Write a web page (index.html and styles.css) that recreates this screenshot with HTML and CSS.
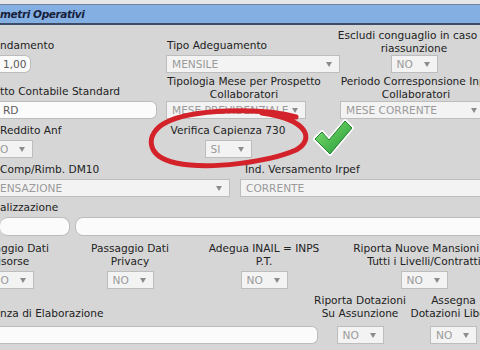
FILE: index.html
```html
<!DOCTYPE html>
<html lang="it">
<head>
    <link rel="stylesheet" href="styles.css">
    <meta charset="UTF-8">
    <title>Parametri Operativi</title>
</head>
<body>
    <div class="page">
        <div class="panel-title">metri Operativi</div>

        <div class="form">
            <div class="row r1">
                <div class="field left w166">
                    <span class="lbl">ndamento</span>
                    <div class="inp cut w31">1,00</div>
                </div>
                <div class="field left w171">
                    <span class="lbl pad1">Tipo Adeguamento</span>
                    <div class="sel w174"><span>MENSILE</span><i class="arr"></i></div>
                </div>
                <div class="field center w154">
                    <span class="lbl two">Escludi conguaglio in caso di<br>riassunzione</span>
                    <div class="sel w47"><span>NO</span><i class="arr"></i></div>
                </div>
            </div>

            <div class="row r2">
                <div class="field left w166">
                    <span class="lbl">tto Contabile Standard</span>
                    <div class="inp cut w157">RD</div>
                </div>
                <div class="field center w156">
                    <span class="lbl two">Tipologia Mese per Prospetto<br>Collaboratori</span>
                    <div class="sel w140 start"><span>MESE PREVIDENZIALE</span><i class="arr"></i></div>
                </div>
                <div class="field center w152 push18">
                    <span class="lbl two">Periodo Corresponsione Inps<br>Collaboratori</span>
                    <div class="sel w145 start"><span>MESE CORRENTE</span><i class="arr"></i></div>
                </div>
            </div>

            <div class="row r3">
                <div class="field left w166">
                    <span class="lbl">Reddito Anf</span>
                    <div class="sel cut w33"><span>O</span><i class="arr"></i></div>
                </div>
                <div class="field center w124">
                    <span class="lbl">Verifica Capienza 730</span>
                    <div class="sel w47"><span>SI</span><i class="arr"></i></div>
                </div>
            </div>

            <div class="row r4">
                <div class="field left w240">
                    <span class="lbl">Comp/Rimb. DM10</span>
                    <div class="sel cut w230"><span>ENSAZIONE</span><i class="arr"></i></div>
                </div>
                <div class="field left w250">
                    <span class="lbl pad5">Ind. Versamento Irpef</span>
                    <div class="sel w250"><span>CORRENTE</span></div>
                </div>
            </div>

            <div class="row r5">
                <div class="field left w480">
                    <span class="lbl">alizzazione</span>
                    <div class="pair">
                        <div class="inp cut tall w70"></div>
                        <div class="inp tall w420"></div>
                    </div>
                </div>
            </div>

            <div class="row r6">
                <div class="field center w100 pull40">
                    <span class="lbl two">Passaggio Dati<br>Risorse</span>
                    <div class="sel w47"><span>NO</span><i class="arr"></i></div>
                </div>
                <div class="field center w140">
                    <span class="lbl two">Passaggio Dati<br>Privacy</span>
                    <div class="sel w47"><span>NO</span><i class="arr"></i></div>
                </div>
                <div class="field center w128">
                    <span class="lbl two">Adegua INAIL = INPS<br>P.T.</span>
                    <div class="sel w47"><span>NO</span><i class="arr"></i></div>
                </div>
                <div class="field center w192">
                    <span class="lbl two">Riporta Nuove Mansioni su<br>Tutti i Livelli/Contratti</span>
                    <div class="sel w47"><span>NO</span><i class="arr"></i></div>
                </div>
            </div>

            <div class="row r7">
                <div class="field left w320">
                    <span class="lbl">nza di Elaborazione</span>
                    <div class="inp cut w318"></div>
                </div>
                <div class="field center w80">
                    <span class="lbl two">Riporta Dotazioni<br>Su Assunzione</span>
                    <div class="sel w47"><span>NO</span><i class="arr"></i></div>
                </div>
                <div class="field center w107">
                    <span class="lbl two">Assegna<br>Dotazioni Libere</span>
                    <div class="sel w47"><span>NO</span><i class="arr"></i></div>
                </div>
            </div>
        </div>

        <!-- annotations drawn over the form -->
        <svg class="marks" width="480" height="350" viewBox="0 0 480 350">
            <defs>
                <linearGradient id="tick" x1="0" y1="0" x2="1" y2="1">
                    <stop offset="0" stop-color="#86e472"/>
                    <stop offset="1" stop-color="#1d9634"/>
                </linearGradient>
            </defs>
            <path class="loop" d="M296,117 C262,107 190,109 165,123 C146,133 144,156 176,163 C210,170 268,162 296,150 C314,140 310,120 262,113"/>
            <path class="tick-edge" d="M315,139 L322,132 L329,140 L345,121 L352,128 L330,154 Z"/>
            <path class="tick-fill" d="M315,139 L322,132 L329,140 L345,121 L352,128 L330,154 Z"/>
        </svg>
    </div>
</body>
</html>
```

FILE: styles.css
```css
html, body {
    margin: 0;
    padding: 0;
}

body {
    width: 480px;
    height: 350px;
    overflow: hidden;
    background-color: #d6d6d6;
    font-family: "DejaVu Sans", Verdana, sans-serif;
    font-size: 10.6px;
    color: #222;
}

.page {
    position: relative;
    width: 480px;
    height: 350px;
    overflow: hidden;
    background: linear-gradient(#e6e6e6 0, #e6e6e6 4px, #d6d6d6 4px);
}

.panel-title {
    margin-top: 4px;
    height: 18px;
    line-height: 18px;
    border-top: 1px solid #6f83a3;
    border-bottom: 2px solid #3d4b66;
    background-color: #84afe2;
    color: #17213c;
    font-size: 10.5px;
    font-weight: bold;
    font-style: italic;
    letter-spacing: -0.4px;
    white-space: nowrap;
}

.row {
    display: flex;
    align-items: flex-end;
}

.r1 { margin-top: 4px; }
.r2 { margin-top: 2px; }
.r3 { margin-top: 5px; }
.r4 { margin-top: 5px; }
.r5 { margin-top: 4px; }
.r6 { margin-top: 6px; }
.r7 { margin-top: 5px; }

.field {
    display: flex;
    flex-direction: column;
    flex: none;
}

.field.left {
    align-items: flex-start;
}

.field.center {
    align-items: center;
    text-align: center;
}

.lbl {
    white-space: nowrap;
    line-height: 13px;
    margin-bottom: 3px;
}

.lbl.two {
    margin-bottom: 0;
}

.r6 .lbl.two {
    margin-bottom: 3px;
}

.r7 .lbl {
    margin-bottom: 6px;
}

.pad1 { padding-left: 1px; }
.pad5 { padding-left: 5px; }
.push18 { margin-left: 18px; }
.pull40 { margin-left: -40px; }
.start { align-self: flex-start; }

.w31 { width: 31px; }
.w33 { width: 33px; }
.w47 { width: 47px; }
.w70 { width: 70px; }
.w80 { width: 80px; }
.w100 { width: 100px; }
.w107 { width: 107px; }
.w124 { width: 124px; }
.w128 { width: 128px; }
.w140 { width: 140px; }
.w145 { width: 145px; }
.w152 { width: 152px; }
.w154 { width: 154px; }
.w156 { width: 156px; }
.w157 { width: 157px; }
.w166 { width: 166px; }
.w171 { width: 171px; }
.w174 { width: 174px; }
.w192 { width: 192px; }
.w230 { width: 230px; }
.w240 { width: 240px; }
.w250 { width: 250px; }
.w318 { width: 318px; }
.w320 { width: 320px; }
.w420 { width: 420px; }
.w480 { width: 480px; }

.inp, .sel {
    box-sizing: border-box;
    height: 18px;
    line-height: 16px;
    flex: none;
    white-space: nowrap;
    overflow: hidden;
    text-align: left;
}

.inp {
    padding-left: 4px;
    border: 1px solid #bcbcbc;
    border-radius: 6px;
    background-color: #fbfbfb;
    color: #5a5a5a;
}

.inp.tall {
    height: 19px;
    border-radius: 8px;
}

.sel {
    display: flex;
    align-items: center;
    justify-content: space-between;
    padding: 0 7px 0 5px;
    border: 1px solid #bdbdbd;
    background-color: #f3f3f3;
    color: #9a9a9a;
}

.sel span {
    overflow: hidden;
}

.cut {
    border-left: none;
    border-top-left-radius: 0;
    border-bottom-left-radius: 0;
    padding-left: 0;
}

.inp.cut {
    padding-left: 3px;
}

.arr {
    flex: none;
    width: 0;
    height: 0;
    margin-left: 4px;
    border-left: 3px solid transparent;
    border-right: 3px solid transparent;
    border-top: 5px solid #8c8c8c;
}

.pair {
    display: flex;
    gap: 5px;
}

.marks {
    position: absolute;
    top: 0;
    left: 0;
    pointer-events: none;
}

.loop {
    fill: none;
    stroke: #d3222a;
    stroke-width: 5;
    stroke-linecap: round;
}

.tick-edge {
    fill: none;
    stroke: #ffffff;
    stroke-width: 4;
    stroke-linejoin: round;
}

.tick-fill {
    fill: url(#tick);
    stroke: #23802f;
    stroke-width: 1;
    stroke-linejoin: round;
}
```
